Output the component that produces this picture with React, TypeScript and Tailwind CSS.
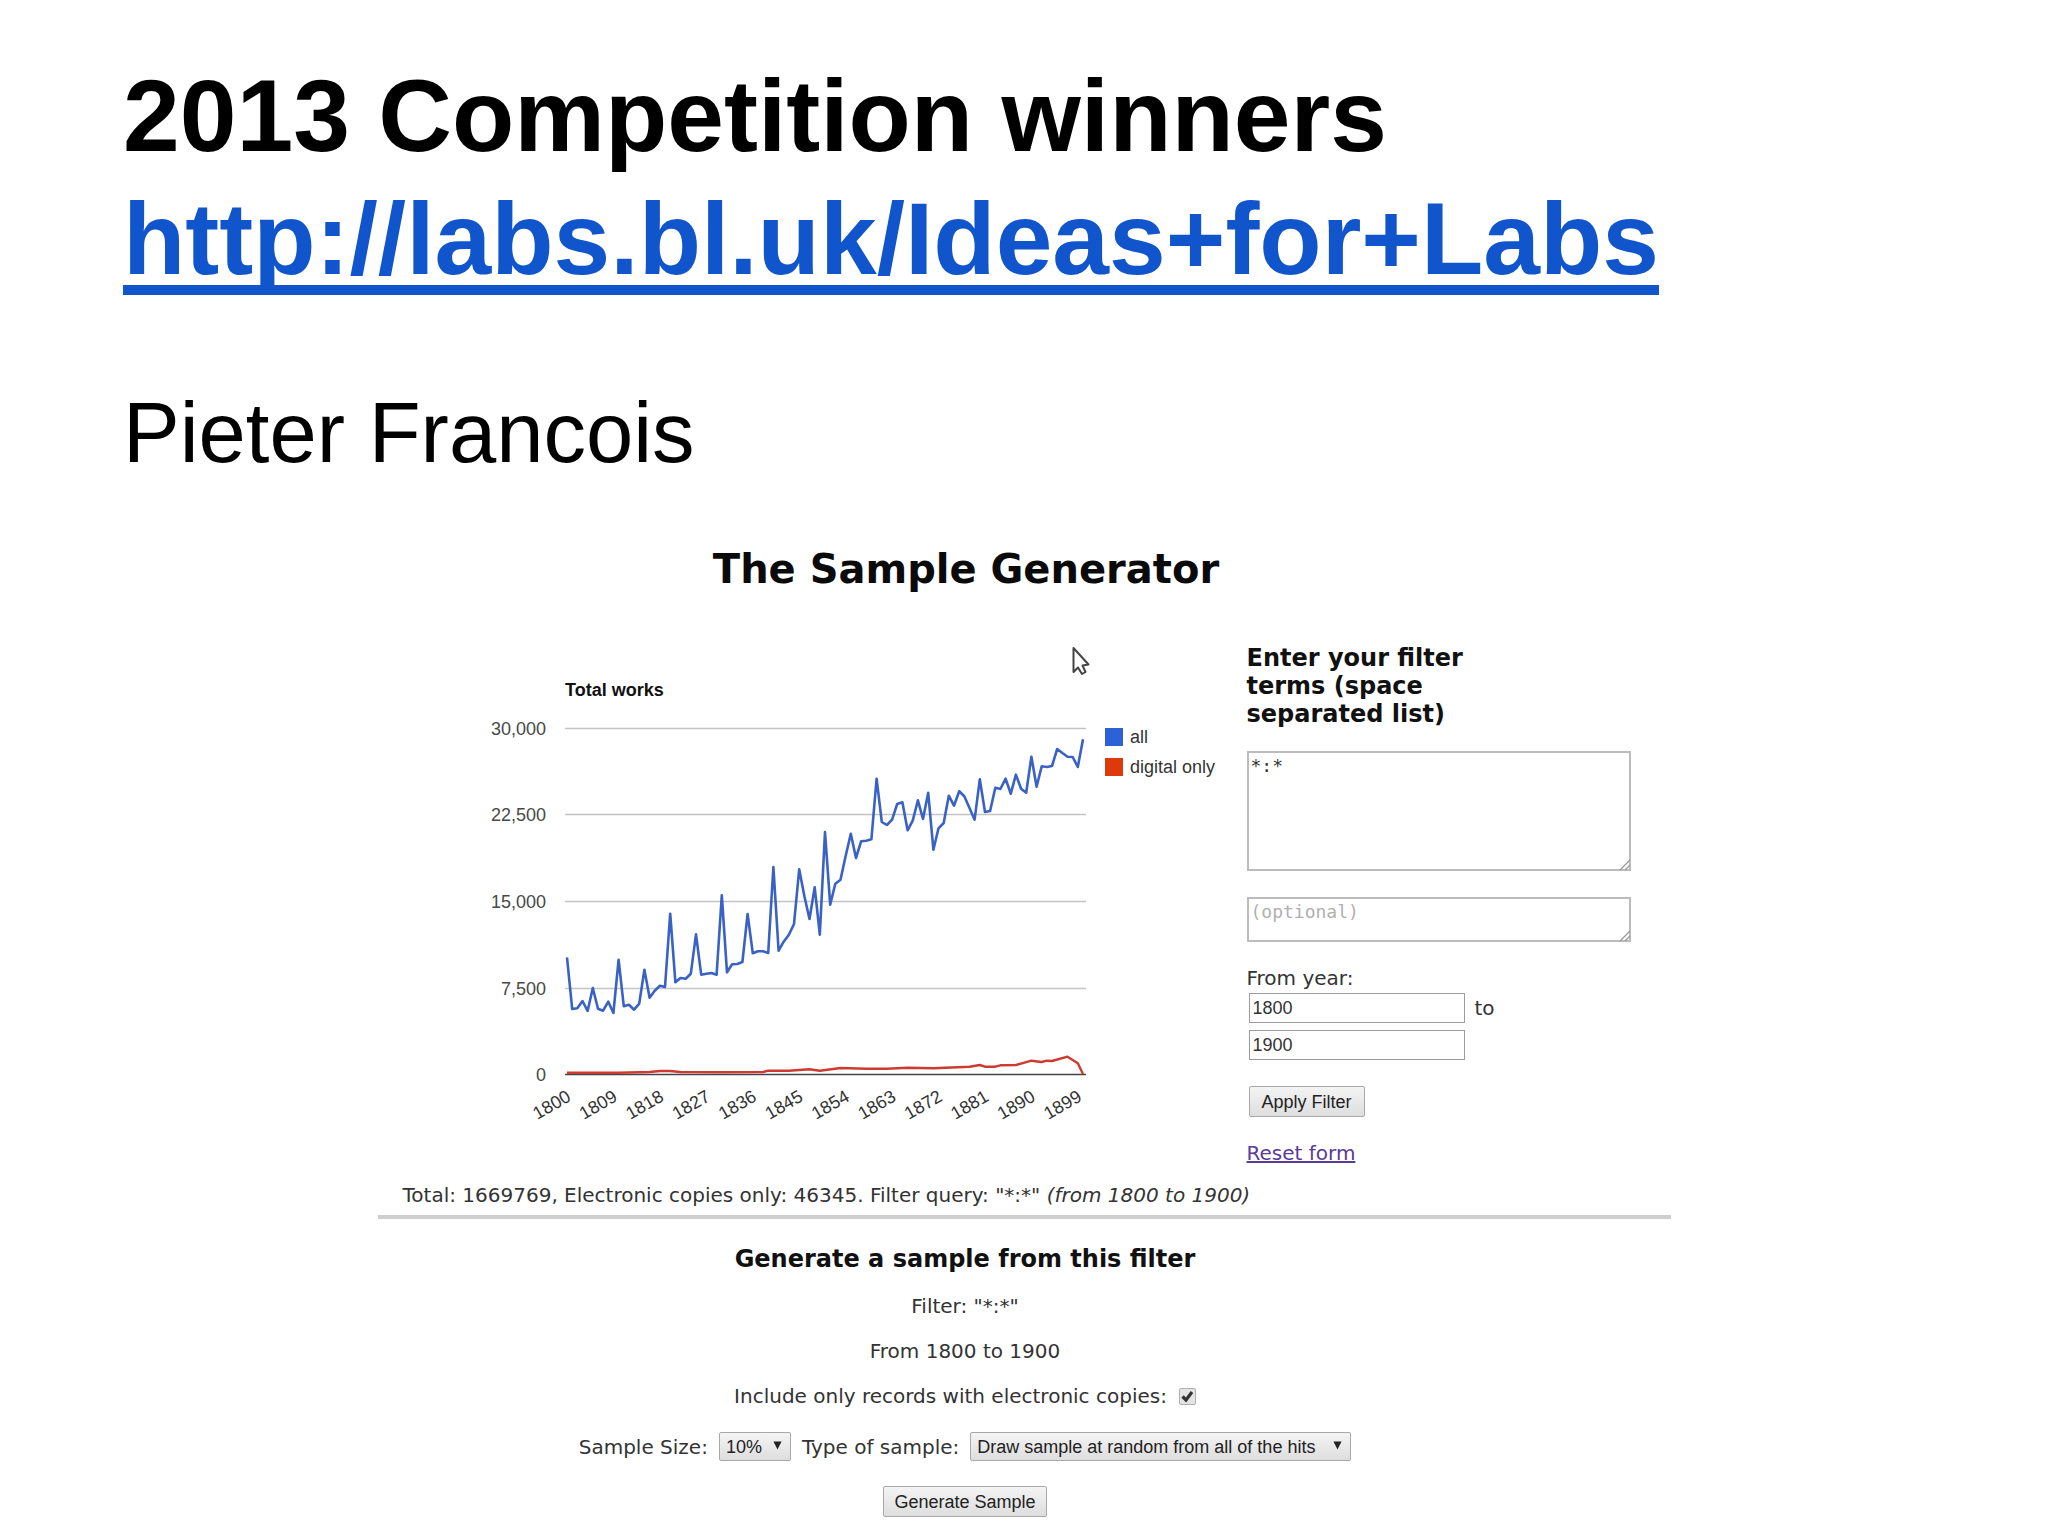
import React from "react";

const CHART_TOP = 88;
const CHART_BASE = 434;
const CHART_LEFT = 84;
const CHART_RIGHT = 605;
const FIRST_X = 86;
const YEAR_STEP = 5.16;

// One value per year from 1800 to 1900, in thirds of a chart unit above the base line.
const ALL_WORKS = [
  350, 195, 197, 219, 189, 258, 196, 190, 217, 183, 343, 203, 208, 193, 211, 313, 229, 250, 265, 261,
  481, 275, 288, 286, 301, 419, 298, 301, 303, 298, 536, 305, 329, 330, 336, 480, 362, 368, 368, 363,
  621, 370, 397, 418, 450, 614, 533, 465, 560, 418, 726, 508, 571, 583, 653, 721, 648, 698, 700, 704,
  886, 756, 747, 763, 810, 815, 731, 760, 821, 765, 844, 673, 737, 753, 835, 805, 848, 833, 798, 763,
  884, 786, 789, 859, 855, 886, 841, 898, 856, 844, 952, 862, 923, 921, 924, 975, 963, 952, 951, 921,
  1004,
];

// [year offset, value] pairs for the digital series.
const DIGITAL_ONLY: [number, number][] = [
  [0, 4], [10, 4], [16, 6], [18, 9], [20, 9], [22, 6], [30, 5], [38, 6], [39, 10], [43, 10], [47, 14],
  [49, 10], [53, 18], [58, 16], [62, 16], [66, 19], [71, 17], [78, 22], [80, 27], [81, 22], [83, 22],
  [84, 26], [87, 27], [90, 40], [92, 36], [93, 40], [94, 39], [97, 52], [98, 42], [99, 32], [100, 0],
];

const GRID = [
  { y: CHART_TOP, label: "30,000" },
  { y: 174, label: "22,500" },
  { y: 261, label: "15,000" },
  { y: 348, label: "7,500" },
  { y: CHART_BASE, label: "0" },
];

const YEARS = [1800, 1809, 1818, 1827, 1836, 1845, 1854, 1863, 1872, 1881, 1890, 1899];

const point = (offset: number, value: number) =>
  `${(FIRST_X + offset * YEAR_STEP).toFixed(1)},${(CHART_BASE - value / 3).toFixed(1)}`;

function WorksChart() {
  return (
    <svg
      viewBox="0 0 750 500"
      className="h-[500px] w-[750px] shrink-0 font-['Liberation_Sans',sans-serif] text-[18px]"
      role="img"
      aria-label="Total works"
    >
      <text x={CHART_LEFT} y={56} fontWeight="bold" fill="#111">
        Total works
      </text>
      {GRID.map((line) => (
        <g key={line.label}>
          <line
            x1={CHART_LEFT}
            x2={CHART_RIGHT}
            y1={line.y + 0.5}
            y2={line.y + 0.5}
            stroke={line.label === "0" ? "#444" : "#c4c4c8"}
            strokeWidth={1.3}
          />
          <text x={65} y={line.y + 7} textAnchor="end" fill="#484848">
            {line.label}
          </text>
        </g>
      ))}
      <polyline
        points={ALL_WORKS.map((value, i) => point(i, value)).join(" ")}
        fill="none"
        stroke="#3a62c4"
        strokeWidth={2.6}
        strokeLinejoin="round"
      />
      <polyline
        points={DIGITAL_ONLY.map(([offset, value]) => point(offset, value)).join(" ")}
        fill="none"
        stroke="#cf3a30"
        strokeWidth={2.4}
        strokeLinejoin="round"
      />
      {YEARS.map((year) => {
        const x = 91 + (year - 1800) * YEAR_STEP;
        return (
          <text key={year} x={x} y={460} textAnchor="end" fill="#333" transform={`rotate(-30 ${x} 460)`}>
            {year}
          </text>
        );
      })}
      <rect x={624} y={88} width={18} height={18} fill="#2c62d6" />
      <rect x={624} y={118} width={18} height={18} fill="#dc3a0c" />
      <text x={649} y={103} fill="#333">
        all
      </text>
      <text x={649} y={133} fill="#333">
        digital only
      </text>
      <path
        d="M592.5 8 L592.5 32 L597 27.5 L601 34 L604.5 32 L601.5 25.5 L607.5 24.5 Z"
        fill="#fff"
        stroke="#444"
        strokeWidth={2}
        strokeLinejoin="round"
      />
    </svg>
  );
}

function Grip() {
  return (
    <svg viewBox="0 0 12 12" className="pointer-events-none absolute right-0 bottom-0 size-3" aria-hidden="true">
      <path d="M1 11 L11 1 M6 11 L11 6" stroke="#999" strokeWidth={1.3} fill="none" />
    </svg>
  );
}

const BUTTON =
  "rounded-[2px] border border-[#a8a8a8] bg-linear-to-b from-[#f4f4f4] to-[#dedede] font-['Liberation_Sans',sans-serif] text-[18px] leading-[20px] text-[#222]";
const FIELD = "border-2 border-[#bcbcbc] bg-white text-[18px] text-[#333]";
const YEAR_FIELD =
  "h-[30px] w-[216px] border border-[#9c9c9c] bg-white px-[3px] font-['Liberation_Sans',sans-serif] text-[18px] text-[#333]";

function FilterForm() {
  return (
    <form className="mt-1 w-[384px] shrink-0">
      <h3 className="w-[240px] text-[24px] leading-[28px] font-bold text-[#111]">
        <label htmlFor="terms">Enter your filter terms (space separated list)</label>
      </h3>
      <div className="relative mt-[23px]">
        <textarea
          id="terms"
          defaultValue="*:*"
          className={`${FIELD} block h-[120px] w-full resize-none px-0.5 py-0.5 font-['DejaVu_Sans_Mono',monospace] leading-[22px]`}
        />
        <Grip />
      </div>
      <div className="relative mt-[26px]">
        <textarea
          aria-label="Optional terms"
          placeholder="(optional)"
          className={`${FIELD} block h-[45px] w-full resize-none px-0.5 py-0.5 font-['DejaVu_Sans_Mono',monospace] leading-[22px] placeholder:text-[#b0b0b0]`}
        />
        <Grip />
      </div>
      <label htmlFor="from-year" className="mt-6 block">
        From year:
      </label>
      <div className="mt-[3px] ml-0.5 flex items-center gap-2.5">
        <input id="from-year" type="text" defaultValue="1800" className={YEAR_FIELD} />
        <label htmlFor="to-year">to</label>
      </div>
      <input id="to-year" type="text" defaultValue="1900" className={`${YEAR_FIELD} mt-[7px] ml-0.5 block`} />
      <button type="button" className={`${BUTTON} mt-[26px] ml-0.5 block h-[31px] w-[116px]`}>
        Apply Filter
      </button>
      <a href="#reset" className="mt-6 inline-block text-[#5a3a9a] underline">
        Reset form
      </a>
    </form>
  );
}

function Dropdown({ id, value, width }: { id: string; value: string; width: string }) {
  return (
    <span className={`relative inline-block ${width}`}>
      <select id={id} defaultValue={value} className={`${BUTTON} block h-[29px] w-full appearance-none pl-1.5`}>
        <option>{value}</option>
      </select>
      <svg
        viewBox="0 0 10 10"
        className="pointer-events-none absolute top-[9px] right-[9px] size-[9px]"
        aria-hidden="true"
      >
        <path d="M0.5 0.5 H9.5 L5 9.5 Z" fill="#222" />
      </svg>
    </span>
  );
}

function SampleForm() {
  return (
    <form className="mt-[26px] flex flex-col items-center pr-[118px]">
      <h3 className="text-[24px] leading-[28px] font-bold text-[#111]">Generate a sample from this filter</h3>
      <p className="mt-[21px]">Filter: "*:*"</p>
      <p className="mt-[21px]">From 1800 to 1900</p>
      <div className="mt-[21px] flex items-center gap-3">
        <label htmlFor="electronic">Include only records with electronic copies:</label>
        <span className="relative block size-[17px]">
          <input
            id="electronic"
            type="checkbox"
            defaultChecked
            className="block size-[17px] appearance-none rounded-[2px] border border-[#b0b0b0] bg-[#e4e4e4]"
          />
          <svg viewBox="0 0 17 17" className="pointer-events-none absolute inset-0 size-[17px]" aria-hidden="true">
            <path d="M3.5 8.5 L7 12 L13 4" fill="none" stroke="#333" strokeWidth={3.2} />
          </svg>
        </span>
      </div>
      <div className="mt-6 flex items-center gap-[11px]">
        <label htmlFor="size">Sample Size:</label>
        <Dropdown id="size" value="10%" width="w-[72px]" />
        <label htmlFor="kind">Type of sample:</label>
        <Dropdown id="kind" value="Draw sample at random from all of the hits" width="w-[381px]" />
      </div>
      <button type="button" className={`${BUTTON} mt-[25px] h-[31px] w-[164px]`}>
        Generate Sample
      </button>
    </form>
  );
}

export default function App() {
  return (
    <main className="min-h-screen bg-white pt-[55px] text-black">
      <header className="px-[123px] font-['Liberation_Sans',sans-serif]">
        <h1 className="text-[102px] leading-[123px] font-bold">
          2013 Competition winners
          <br />
          <a
            href="http://labs.bl.uk/Ideas+for+Labs"
            className="text-[#1155cc] underline decoration-[10px] underline-offset-[11px] [text-decoration-skip-ink:none]"
          >
            http://labs.bl.uk/Ideas+for+Labs
          </a>
        </h1>
        <p className="mt-[83px] text-[85px] leading-[98px]">Pieter Francois</p>
      </header>
      <section className="mx-auto mt-[63px] max-w-[1293px] font-['DejaVu_Sans',sans-serif] text-[20px] leading-[24px] text-[#333]">
        <h2 className="pr-[116px] text-center text-[40px] leading-[48px] font-bold text-[#0a0a0a]">
          The Sample Generator
        </h2>
        <div className="mt-[47px] flex h-[525px] gap-4 pl-[103px]">
          <WorksChart />
          <FilterForm />
        </div>
        <p className="mt-[18px] pl-[25px]">
          Total: 1669769, Electronic copies only: 46345. Filter query: "*:*" <em>(from 1800 to 1900)</em>
        </p>
        <hr className="mt-2 border-t-4 border-[#cecece]" />
        <SampleForm />
      </section>
    </main>
  );
}
